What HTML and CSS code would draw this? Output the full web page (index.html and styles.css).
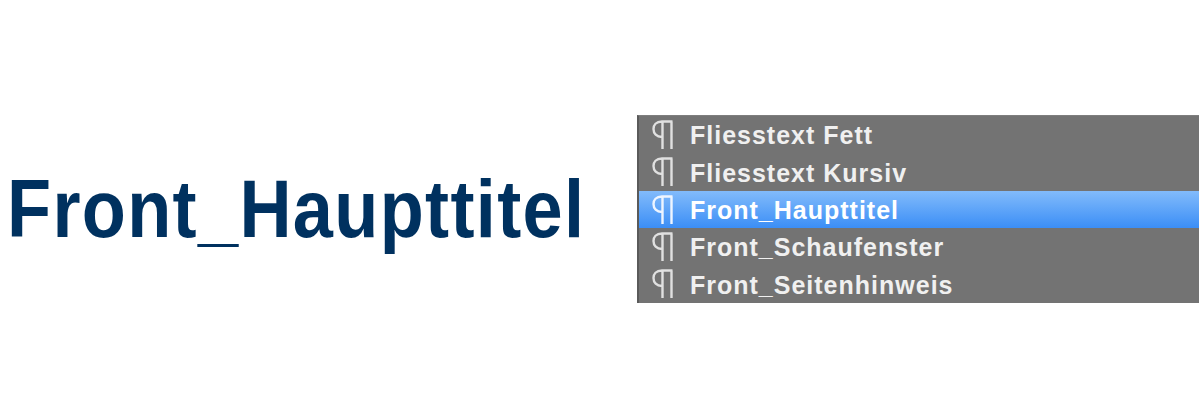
FILE: index.html
```html
<!DOCTYPE html>
<html>
<head>
<meta charset="utf-8">
<link rel="stylesheet" href="styles.css">
</head>
<body>
<div class="stage">
  <div class="sample"><span class="sample-text">Front_Haupttitel</span></div>
  <div class="panel">
    <div class="row"><svg class="pil" viewBox="0 0 22 30"><path d="M10 1.5H20.5M10 1.5C4 1.5 1.5 5 1.5 9C1.5 13.5 4.5 17 10 17M10.5 1.5V29M19.5 1.5V29"/></svg><span>Fliesstext Fett</span></div>
    <div class="row"><svg class="pil" viewBox="0 0 22 30"><path d="M10 1.5H20.5M10 1.5C4 1.5 1.5 5 1.5 9C1.5 13.5 4.5 17 10 17M10.5 1.5V29M19.5 1.5V29"/></svg><span>Fliesstext Kursiv</span></div>
    <div class="row sel"><svg class="pil" viewBox="0 0 22 30"><path d="M10 1.5H20.5M10 1.5C4 1.5 1.5 5 1.5 9C1.5 13.5 4.5 17 10 17M10.5 1.5V29M19.5 1.5V29"/></svg><span>Front_Haupttitel</span></div>
    <div class="row"><svg class="pil" viewBox="0 0 22 30"><path d="M10 1.5H20.5M10 1.5C4 1.5 1.5 5 1.5 9C1.5 13.5 4.5 17 10 17M10.5 1.5V29M19.5 1.5V29"/></svg><span>Front_Schaufenster</span></div>
    <div class="row"><svg class="pil" viewBox="0 0 22 30"><path d="M10 1.5H20.5M10 1.5C4 1.5 1.5 5 1.5 9C1.5 13.5 4.5 17 10 17M10.5 1.5V29M19.5 1.5V29"/></svg><span>Front_Seitenhinweis</span></div>
  </div>
</div>
</body>
</html>
```

FILE: styles.css
```css
html, body {
  margin: 0;
  padding: 0;
  background: #ffffff;
}
.stage {
  display: flex;
  align-items: flex-start;
  width: 1200px;
  height: 420px;
}
.sample {
  width: 630px;
  padding-left: 7px;
  margin-top: 168px;
  font-family: "Liberation Sans", Arial, sans-serif;
  font-weight: bold;
  font-size: 82px;
  line-height: 82px;
  color: #00315f;
  white-space: nowrap;
}
.sample-text {
  display: inline-block;
  letter-spacing: 1.5px;
  transform: scaleX(0.88);
  transform-origin: left center;
}
.panel {
  margin-top: 115px;
  width: 562px;
  height: 188px;
  background: #737373;
  border-left: 2px solid #5a5a5a;
  border-top: 1px solid #7e7e7e;
  box-sizing: border-box;
  display: flex;
  flex-direction: column;
}
.row {
  height: 37.6px;
  display: flex;
  align-items: center;
  padding-left: 13px;
  font-family: "Liberation Sans", Arial, sans-serif;
  font-weight: bold;
  font-size: 25px;
  letter-spacing: 1px;
  color: #f0f0f0;
  white-space: nowrap;
}
.row span {
  margin-left: 16px;
  padding-top: 2px;
}
.row.sel {
  background: linear-gradient(#82bbfb, #3b8ef6);
  color: #ffffff;
}
.pil {
  width: 22px;
  height: 30px;
  flex: none;
}
.pil path {
  fill: none;
  stroke: #e0e0e0;
  stroke-width: 2.4;
}
.sel .pil path {
  stroke: #eef5ff;
}
```
